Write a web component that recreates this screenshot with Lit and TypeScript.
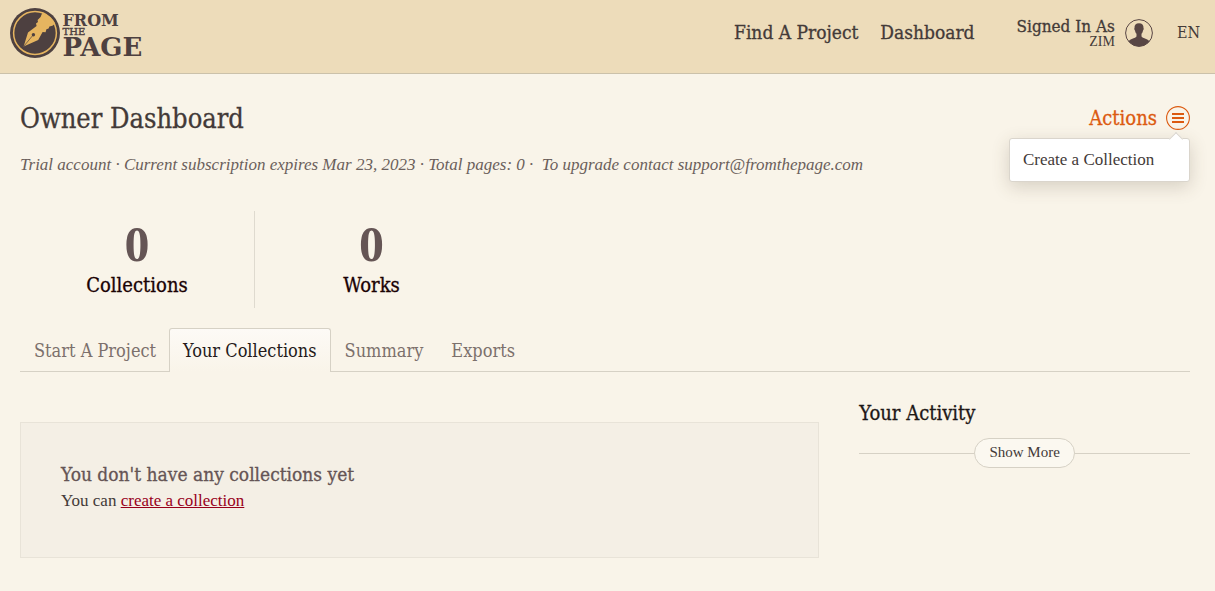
import { LitElement, html, css, svg } from "lit";
import { customElement, state } from "lit/decorators.js";

const tabs = ["Start A Project", "Your Collections", "Summary", "Exports"];
const stats = [
  { value: 0, label: "Collections" },
  { value: 0, label: "Works" },
];

@customElement("ftp-logo")
class FtpLogo extends LitElement {
  static styles = css`
    :host { display: block; }
    .logo { display: block; width: 136px; height: 50px; overflow: visible; }
    .word { font-family: "DejaVu Serif", serif; font-weight: bold; fill: #4d4040; }
    .from { font-size: 16px; }
    .the { font-size: 10px; font-weight: normal; stroke: #4d4040; stroke-width: 0.4px; }
    .page { font-size: 26px; }
  `;
  render() {
    return html`<svg class="logo" viewBox="0 0 136 50" role="img" aria-label="From the Page">
      ${svg`
        <circle cx="25" cy="25" r="25" fill="#4d4040"/>
        <circle cx="25" cy="25" r="21.4" fill="none" stroke="#e6b560" stroke-width="1.5"/>
        <path d="M32.2 4.9 L30.6 9 L27.6 12 L28 14 L26 15.6 L26.6 18 L18 24.6 L13.6 38.4 L28.2 32 L32.6 24 L35.6 24.2 L36.4 21.2 L38.6 20.6 L39.4 18.4 L42.4 17.8 L45.2 15.4 A21.4 21.4 0 0 0 32.2 4.9Z" fill="#e6b560"/>
        <path d="M14 38 L23.3 26.8" stroke="#4d4040" stroke-width="0.7"/>
        <circle cx="23.4" cy="26.8" r="1.7" fill="#4d4040"/>
        <text class="word from" x="52.5" y="18">FROM</text>
        <text class="word the" x="52.5" y="27.4">THE</text>
        <text class="word page" x="52.5" y="48">PAGE</text>
      `}
    </svg>`;
  }
}

@customElement("app-root")
class AppRoot extends LitElement {
  @state() private menuOpen = true;
  @state() private activeTab = 1;

  static styles = css`
    :host {
      display: block;
      min-height: 100vh;
      background: #f9f4e9;
      color: #433a38;
      font: 15px/24px "DejaVu Serif Condensed", "DejaVu Serif", serif;
      --text: "Liberation Serif", serif;
      --line: #d6d1c5;
    }
    * { box-sizing: border-box; }
    a { color: inherit; text-decoration: none; }
    h1, h2, p { margin: 0; font-weight: normal; }
    button { font: inherit; color: inherit; background: none; border: 0; padding: 0; cursor: pointer; }
    .header {
      display: flex; align-items: center; justify-content: space-between;
      min-height: 74px; padding: 0 15px 8px 10px;
      background: #eddcba; border-bottom: 1px solid #cbc1aa;
    }
    .nav { display: flex; align-items: center; font-size: 19px; }
    .nav-link { margin-right: 22px; padding-bottom: 2px; }
    .nav-link, .user-label, .title, .actions-button, .stat-label, .empty-title, .activity-title {
      -webkit-text-stroke: 0.3px currentColor;
    }
    .user { display: flex; align-items: center; gap: 10px; margin: 0 24px 0 20px; }
    .user-text { display: flex; flex-direction: column; align-items: flex-end; font-size: 17px; line-height: 18px; }
    .user-name { font: 14px/14px var(--text); }
    .avatar { display: block; width: 28px; height: 28px; }
    .lang { font-size: 16px; }
    .main { padding: 28px 25px 32px 20px; }
    .title-row { display: flex; align-items: center; justify-content: space-between; }
    .title { font-size: 27px; line-height: 34px; }
    .actions { position: relative; padding-bottom: 2px; }
    .actions-button { display: flex; align-items: center; gap: 9px; color: #dc5a10; font-size: 20px; }
    .menu-icon { display: block; width: 24px; height: 24px; }
    .menu {
      position: absolute; right: 0; top: 32px; width: 181px; padding: 9px 13px;
      background: #fff; border: 1px solid #dad5cc; border-radius: 3px;
      box-shadow: 0 5px 18px rgba(80, 65, 45, 0.2);
      font: 17px/24px var(--text);
    }
    .menu::before {
      content: ""; position: absolute; right: 8px; top: -5px; width: 9px; height: 9px;
      background: #fff; border: solid #dad5cc; border-width: 1px 0 0 1px; transform: rotate(45deg);
    }
    .plan { margin-top: 17px; font: italic 17px/24px var(--text); color: #6b5f5b; }
    .stats { display: flex; margin-top: 34px; }
    .stat { flex: 0 0 20%; padding: 9px 0 10px; text-align: center; }
    .stat + .stat { border-left: 1px solid #dfdacf; }
    .stat-value { margin-bottom: 4px; font: bold 50px/48px var(--text); color: #655555; }
    .stat-label { font-size: 20px; line-height: 26px; color: #1a0204; }
    .tabs { display: flex; margin-top: 20px; border-bottom: 1px solid var(--line); }
    .tab {
      padding: 10px 13px 9px; margin-bottom: -1px; border: 1px solid transparent; border-bottom: 0;
      font-size: 18px; line-height: 24px; color: #7c706c;
    }
    .tab-active {
      color: #241a1a; border-color: var(--line); border-radius: 3px 3px 0 0;
      background: linear-gradient(#fdfaf6, #f9f4e9); margin-left: -1px;
    }
    .columns { display: grid; grid-template-columns: 29fr 12fr; gap: 40px; align-items: start; }
    .empty {
      margin-top: 50px; padding: 38px 40px 44px; border: 1px solid #e8e3d8; background: #f4efe5;
    }
    .empty-title { margin-bottom: 2px; font-size: 19px; line-height: 26px; color: #655555; }
    .empty-text { font: 17px/24px var(--text); }
    .create { color: #98001a; text-decoration: underline; }
    .activity { margin-top: 28px; }
    .activity-title { font-size: 20px; line-height: 26px; color: #1d1716; }
    .more-row { display: flex; align-items: center; margin-top: 12px; }
    .rule { flex: 1; height: 1px; background: var(--line); }
    .more {
      height: 30px; padding: 0 14px 2px; border: 1px solid var(--line); border-radius: 15px;
      background: #fbf8f0; font: 15px/26px var(--text);
    }
  `;

  render() {
    return html`
      <header class="header">
        <a href="#" aria-label="From the Page home"><ftp-logo></ftp-logo></a>
        <nav class="nav">
          <a class="nav-link" href="#">Find A Project</a>
          <a class="nav-link" href="#">Dashboard</a>
          <a class="user" href="#">
            <span class="user-text"><span class="user-label">Signed In As</span><span class="user-name">ZIM</span></span>
            <svg class="avatar" viewBox="0 0 28 28" aria-hidden="true">
              <circle cx="14" cy="14" r="13.4" fill="none" stroke="#584644" stroke-width="1"/>
              <path d="M14 4.2c-3.1 0-4.7 2-4.5 4.8-.5.5-.1 2.2.5 2.5.2 1.5.8 2.5 1.5 3.3v2.8c-1.2 1.8-5.4 2.2-7.9 4.6A13.4 13.4 0 0 0 14 27.4a13.4 13.4 0 0 0 10.4-5.2c-2.5-2.4-6.7-2.8-7.9-4.6v-2.8c.7-.8 1.3-1.8 1.5-3.3.6-.3 1-2 .5-2.5.2-2.8-1.4-4.8-4.5-4.8Z" fill="#584644"/>
            </svg>
          </a>
          <button class="lang">EN</button>
        </nav>
      </header>
      <main class="main">
        <div class="title-row">
          <h1 class="title">Owner Dashboard</h1>
          <div class="actions">
            <button class="actions-button" aria-expanded=${this.menuOpen} @click=${() => (this.menuOpen = !this.menuOpen)}>
              <span>Actions</span>
              <svg class="menu-icon" viewBox="0 0 24 24" aria-hidden="true">
                <circle cx="12" cy="12" r="11.4" fill="none" stroke="#dc5a10" stroke-width="1.1"/>
                <path d="M6 8h12M6 12h12M6 16h12" stroke="#dc5a10" stroke-width="2"/>
              </svg>
            </button>
            ${this.menuOpen ? html`<div class="menu"><a href="#">Create a Collection</a></div>` : null}
          </div>
        </div>
        <p class="plan">Trial account · Current subscription expires Mar 23, 2023 · Total pages: 0 ·&nbsp; To upgrade contact support@fromthepage.com</p>
        <section class="stats">
          ${stats.map((s) => html`<div class="stat"><div class="stat-value">${s.value}</div><div class="stat-label">${s.label}</div></div>`)}
        </section>
        <nav class="tabs">
          ${tabs.map((t, i) => html`<button class="tab ${i === this.activeTab ? "tab-active" : ""}" @click=${() => (this.activeTab = i)}>${t}</button>`)}
        </nav>
        <div class="columns">
          <section class="empty">
            <h2 class="empty-title">You don't have any collections yet</h2>
            <p class="empty-text">You can <a class="create" href="#">create a collection</a></p>
          </section>
          <aside class="activity">
            <h2 class="activity-title">Your Activity</h2>
            <div class="more-row"><span class="rule"></span><button class="more">Show More</button><span class="rule"></span></div>
          </aside>
        </div>
      </main>
    `;
  }
}
